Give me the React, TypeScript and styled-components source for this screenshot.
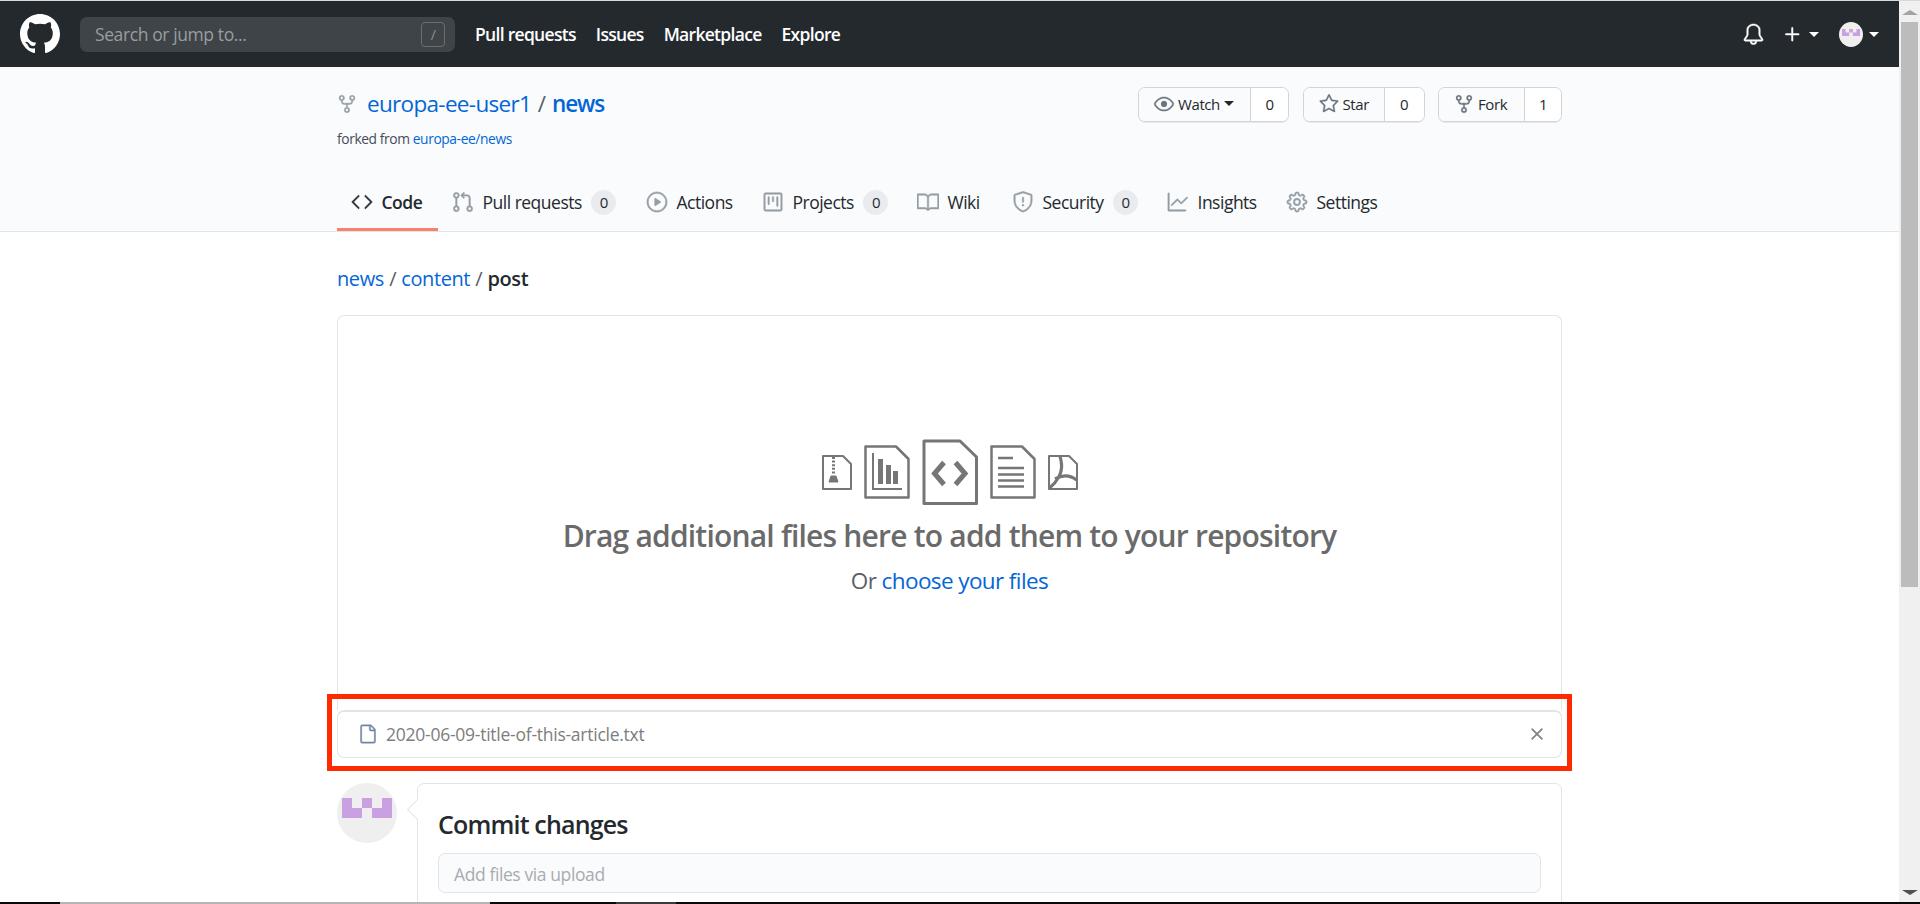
import React from "react";
import styled, { createGlobalStyle } from "styled-components";
import {
  GoBell, GoBook, GoCode, GoEye, GoFile, GoGear, GoGitPullRequest, GoGraph,
  GoPlay, GoPlus, GoProject, GoRepoForked, GoShield, GoStar, GoX,
} from "react-icons/go";

const Global = createGlobalStyle`
  html, body { margin: 0; padding: 0; height: 904px; overflow: hidden; background: #fff; }
  * { box-sizing: border-box; }
  body { font-family: "Open Sans", "Noto Sans", "Liberation Sans", sans-serif; color: #24292e; letter-spacing: -0.4px; }
`;

const Shell = styled.div`height: 904px; display: flex; flex-direction: column; overflow: hidden;`;
const TopEdge = styled.div`height: 1px; background: #d8d8d8; flex: none;`;
const Middle = styled.div`flex: 1; min-height: 0; display: flex;`;
const Page = styled.div`flex: 1; min-width: 0; overflow: hidden;`;

const Scrollbar = styled.div`
  width: 21px; flex: none; background: #f0f0f0; display: flex; flex-direction: column; align-items: center;
`;
const ArrowUp = styled.div`
  margin-top: 9px; width: 0; height: 0; border: 5px solid transparent; border-top: 0; border-bottom: 5px solid #a3a3a3; border-left-width: 8px; border-right-width: 8px;
`;
const Thumb = styled.div`margin-top: 7px; width: 17px; height: 565px; background: #bcbcbc;`;
const ArrowDown = styled.div`
  margin-top: auto; margin-bottom: 7px; width: 0; height: 0; border: 5px solid transparent; border-bottom: 0; border-top: 5px solid #505050; border-left-width: 8px; border-right-width: 8px;
`;
const Taskbar = styled.div`height: 2px; flex: none; display: flex; background: #0a0a0a;`;
const TaskSegment = styled.div<{ $w: number; $c: string }>`width: ${p => p.$w}px; background: ${p => p.$c};`;

const Header = styled.header`
  height: 66px; background: #24292e; display: flex; align-items: center; padding: 0 20px; color: #fff; flex: none;
  & > svg:first-child { flex: none; }
`;
const Search = styled.div`
  width: 375px; height: 35px; margin-left: 20px; border-radius: 7px; background: #3f4448;
  display: flex; align-items: center; justify-content: space-between; padding: 0 10px 0 15px;
  color: #9a9da0; font-size: 17.5px;
`;
const SlashKey = styled.span`
  width: 24px; height: 25px; border: 1px solid #6a6e72; border-radius: 4px; display: flex; align-items: center; justify-content: center;
  font-size: 14px; color: #8c9094;
`;
const TopNav = styled.nav`display: flex; gap: 20px; margin-left: 20px;`;
const TopLink = styled.a`font-size: 17.5px; font-weight: 600; color: #fff; letter-spacing: -0.7px;`;
const HeaderRight = styled.div`
  margin-left: auto; display: flex; align-items: center;
  svg { stroke: currentColor; stroke-width: 0.5; }
`;
const Caret = styled.span<{ $c?: string }>`
  display: inline-block; width: 0; height: 0; border: 5px solid transparent; border-bottom: 0; border-top: 5px solid ${p => p.$c || "#fff"};
`;
const PlusWrap = styled.span`display: flex; align-items: center; gap: 5px; margin-left: 16px;`;
const MiniAvatar = styled.span`
  width: 24px; height: 25px; border-radius: 50%; background: #efefef; display: flex; align-items: center; justify-content: center; padding-bottom: 3px; margin-left: 20px; margin-right: 6px;
  svg { stroke: none; }
`;

const RepoHead = styled.div`height: 165px; background: #fafbfc; border-bottom: 1px solid #e1e4e8;`;
const Container = styled.div`width: 1225px; margin: 0 auto;`;
const RepoHeadInner = styled(Container)`height: 100%; display: flex; flex-direction: column;`;
const TitleRow = styled.div`display: flex; justify-content: space-between; padding-top: 20px;`;
const TitleBlock = styled.div`display: flex; flex-direction: column;`;
const TitleLine = styled.h1`
  margin: 0; font-size: 22.5px; font-weight: 400; line-height: 34px; display: flex; align-items: center; color: #586069;
  svg { color: #959da5; margin-right: 10px; flex: none; stroke: currentColor; stroke-width: 0.5; }
`;
const Blue = styled.a<{ $strong?: boolean }>`
  color: #0366d6; font-weight: ${p => (p.$strong ? 600 : 400)}; letter-spacing: ${p => (p.$strong ? "-1.1px" : "-0.68px")};
`;
const Sep = styled.span`margin: 0 6.5px;`;
const Forked = styled.div`font-size: 13.8px; line-height: 20px; margin-top: 8px; color: #444d56; a { color: #0366d6; }`;
const Actions = styled.div`display: flex; gap: 13.5px;`;
const BtnGroup = styled.div`
  display: flex; height: 35px; border: 1px solid #d1d5da; border-radius: 7px; overflow: hidden; font-size: 15px; box-shadow: 0 1px 0 rgba(27,31,35,.08);
`;
const BtnMain = styled.div<{ $w: number }>`
  width: ${p => p.$w}px; background: #fafbfc; display: flex; align-items: center; gap: 4px; padding: 0 0 2px 15px; font-weight: 500; border-right: 1px solid #d1d5da;
  svg { color: #6a737d; stroke: currentColor; stroke-width: 0.5; }
`;
const BtnCount = styled.div<{ $w: number }>`
  width: ${p => p.$w}px; background: #fff; display: flex; align-items: center; justify-content: center; padding-bottom: 2px; font-weight: 500;
`;
const BtnCaret = styled(Caret)`margin-left: 0;`;

const Tabs = styled.nav`margin-top: auto; display: flex; height: 53px;`;
const Tab = styled.a<{ $active?: boolean; $w: number }>`
  width: ${p => p.$w}px; height: 53px; display: flex; align-items: center; justify-content: flex-start; padding: 0 0 2px 15px; gap: 9.5px; font-size: 17.5px; letter-spacing: -0.5px;
  font-weight: ${p => (p.$active ? 600 : 400)}; color: #24292e;
  border-bottom: 3px solid ${p => (p.$active ? "#f9826c" : "transparent")};
  svg { flex: none; width: 22px; height: 22px; margin: 0 -1px; color: ${p => (p.$active ? "#24292e" : "#959da5")}; stroke: currentColor; stroke-width: 0.6; }
`;
const Badge = styled.span`
  min-width: 25px; height: 25px; border-radius: 50%; background: #e9ebee; display: flex; align-items: center; justify-content: center; font-size: 15px; font-weight: 500;
`;

const Crumbs = styled.div`margin-top: 34px; font-size: 20px; line-height: 26px; color: #586069; word-spacing: 0.4px; a { color: #0366d6; }`;
const CrumbStrong = styled.a`font-weight: 500;`;
const CrumbLast = styled.span`font-weight: 600; color: #24292e;`;

const DropZone = styled.div`
  margin-top: 23px; height: 395px; border: 1px solid #e1e4e8; border-bottom: 0; border-radius: 7px 7px 0 0;
  display: flex; flex-direction: column; align-items: center; padding-top: 123px;
`;
const FileIcons = styled.div`display: flex; align-items: center; gap: 12px; height: 66px;`;
const DropTitle = styled.h2`margin: 11px 0 0; font-size: 30px; line-height: 40px; font-weight: 600; color: #6a6a6a; letter-spacing: -0.8px;`;
const DropSub = styled.p`margin: 10px 0 0; font-size: 22.5px; line-height: 30px; color: #586069; letter-spacing: -0.6px; a { color: #0366d6; }`;

const FileRowWrap = styled.div`position: relative;`;
const FileRow = styled.div`
  height: 48px; border: 1px solid #e1e4e8; border-top: 2px solid #e1e4e8; border-radius: 7px; display: flex; align-items: center; padding: 0 14px 2px 20px;
  color: #6a737d; font-size: 17.5px;
  svg { color: #6f84a3; flex: none; stroke: currentColor; stroke-width: 0.5; }
`;
const FileName = styled.span`margin-left: 8px; flex: 1; color: #7d7d7d; letter-spacing: -0.25px;`;
const CloseIcon = styled(GoX)`&& { color: #858585; stroke: #858585; stroke-width: 0.8; }`;
const Highlight = styled.div`
  position: absolute; left: -10px; right: -10px; top: -16px; bottom: -13px; border: 5px solid #ff2a00; pointer-events: none;
`;

const CommitRow = styled.div`margin-top: 25px; display: flex; gap: 20px; align-items: flex-start;`;
const Avatar = styled.div`
  width: 60px; height: 60px; border-radius: 50%; background: #efefef; flex: none; display: flex; align-items: center; justify-content: center; padding-bottom: 10px;
`;
const CommitBox = styled.div`
  flex: 1; position: relative; height: 200px; border: 1px solid #e1e4e8; border-radius: 7px; padding: 24px 20px 20px;
  &::before {
    content: ""; position: absolute; left: -8px; top: 18px; width: 14px; height: 14px; background: #fff;
    border-left: 1px solid #e1e4e8; border-bottom: 1px solid #e1e4e8; transform: rotate(45deg);
  }
`;
const CommitTitle = styled.h3`margin: 0; font-size: 25px; line-height: 32px; font-weight: 600; color: #24292e; letter-spacing: -0.83px;`;
const CommitInput = styled.div`
  margin-top: 13px; height: 40px; border: 1px solid #e1e4e8; border-radius: 7px; background: #fafbfc; display: flex; align-items: center; padding: 2px 0 0 15px;
  color: #a8acb0; font-size: 17.5px;
`;

const GithubMark = () => (
  <svg width="40" height="40" viewBox="0 0 16 16" fill="currentColor">
    <path d="M8 0C3.58 0 0 3.58 0 8c0 3.54 2.29 6.53 5.47 7.59.4.07.55-.17.55-.38 0-.19-.01-.82-.01-1.49-2.01.37-2.53-.49-2.69-.94-.09-.23-.48-.94-.82-1.13-.28-.15-.68-.52-.01-.53.63-.01 1.08.58 1.23.82.72 1.21 1.87.87 2.33.66.07-.52.28-.87.51-1.07-1.78-.2-3.64-.89-3.64-3.95 0-.87.31-1.59.82-2.15-.08-.2-.36-1.02.08-2.12 0 0 .67-.21 2.2.82.64-.18 1.32-.27 2-.27.68 0 1.36.09 2 .27 1.53-1.04 2.2-.82 2.2-.82.44 1.1.16 1.92.08 2.12.51.56.82 1.27.82 2.15 0 3.07-1.87 3.75-3.65 3.95.29.25.54.73.54 1.48 0 1.07-.01 1.93-.01 2.2 0 .21.15.46.55.38A8.013 8.013 0 0016 8c0-4.42-3.58-8-8-8z" />
  </svg>
);

const Identicon = ({ w }: { w: number }) => (
  <svg width={w} height={(w * 2) / 5} viewBox="0 0 50 20">
    <path fill="#c9a0e2" d="M0 0h10v10h10V0h10v10h10V0h10v20H30V10H20v10H0z" />
  </svg>
);

const Outline = ({ d, sw }: { d: string; sw: number }) => (
  <path d={d} fill="none" stroke="#767676" strokeWidth={sw} strokeLinejoin="round" />
);

const ZipIcon = () => (
  <svg width="30" height="35" viewBox="0 0 30 35">
    <Outline d="M1 1H21L29 9V34H1Z" sw={2} />
    <path d="M11.5 2V20" stroke="#767676" strokeWidth="3" strokeDasharray="2 1.6" fill="none" />
    <path d="M9 21H14L16 27H7Z" fill="#767676" stroke="#767676" strokeWidth="1" />
  </svg>
);
const ChartIcon = () => (
  <svg width="46" height="54" viewBox="0 0 46 54">
    <Outline d="M1.5 1.5H32L44.5 14V52.5H1.5Z" sw={2.5} />
    <path d="M9 8V44H38" fill="none" stroke="#767676" strokeWidth="2" />
    <path d="M14 14h5v25h-5zM22 20h5v19h-5zM29 26h5v13h-5z" fill="#767676" />
  </svg>
);
const CodeIcon = () => (
  <svg width="56" height="66" viewBox="0 0 56 66">
    <Outline d="M2 2H38L54.5 18V64.5H2Z" sw={3} />
    <path d="M22 23.5L12.5 34.5L22 45.5M33.5 23.5L43 34.5L33.5 45.5" fill="none" stroke="#767676" strokeWidth="5" />
  </svg>
);
const DocIcon = () => (
  <svg width="46" height="54" viewBox="0 0 46 54">
    <Outline d="M1.5 1.5H32L44.5 14V52.5H1.5Z" sw={2.5} />
    <path d="M8 13H23M8 23H34M8 29.5H34M8 35.5H34M8 41.5H34" fill="none" stroke="#767676" strokeWidth="2.5" />
  </svg>
);
const PdfIcon = () => (
  <svg width="30" height="35" viewBox="0 0 30 35">
    <Outline d="M1 1H21L29 9V34H1Z" sw={2} />
    <path d="M1.5 33C9 27 14.5 18 13.5 9Q13 4 12 1.5M7 24C14 20 22 20 28.5 25" fill="none" stroke="#767676" strokeWidth="3.2" />
  </svg>
);

export default function App() {
  return (
    <Shell>
      <Global />
      <TopEdge />
      <Middle>
        <Page>
          <Header>
            <GithubMark />
            <Search>
              Search or jump to...
              <SlashKey>/</SlashKey>
            </Search>
            <TopNav>
              <TopLink>Pull requests</TopLink>
              <TopLink>Issues</TopLink>
              <TopLink>Marketplace</TopLink>
              <TopLink>Explore</TopLink>
            </TopNav>
            <HeaderRight>
              <GoBell size={23} />
              <PlusWrap>
                <GoPlus size={23} />
                <Caret />
              </PlusWrap>
              <MiniAvatar>
                <Identicon w={18} />
              </MiniAvatar>
              <Caret />
            </HeaderRight>
          </Header>

          <RepoHead>
            <RepoHeadInner>
              <TitleRow>
                <TitleBlock>
                  <TitleLine>
                    <GoRepoForked size={20} />
                    <Blue>europa-ee-user1</Blue>
                    <Sep>/</Sep>
                    <Blue $strong>news</Blue>
                  </TitleLine>
                  <Forked>
                    forked from <a>europa-ee/news</a>
                  </Forked>
                </TitleBlock>
                <Actions>
                  <BtnGroup>
                    <BtnMain $w={112}>
                      <GoEye size={20} />
                      Watch
                      <BtnCaret $c="#24292e" />
                    </BtnMain>
                    <BtnCount $w={37}>0</BtnCount>
                  </BtnGroup>
                  <BtnGroup>
                    <BtnMain $w={81}>
                      <GoStar size={20} />
                      Star
                    </BtnMain>
                    <BtnCount $w={39}>0</BtnCount>
                  </BtnGroup>
                  <BtnGroup>
                    <BtnMain $w={86}>
                      <GoRepoForked size={20} />
                      Fork
                    </BtnMain>
                    <BtnCount $w={36}>1</BtnCount>
                  </BtnGroup>
                </Actions>
              </TitleRow>
              <Tabs>
                <Tab $active $w={101}><GoCode size={20} />Code</Tab>
                <Tab $w={194}><GoGitPullRequest size={20} />Pull requests<Badge>0</Badge></Tab>
                <Tab $w={116}><GoPlay size={20} />Actions</Tab>
                <Tab $w={155}><GoProject size={20} />Projects<Badge>0</Badge></Tab>
                <Tab $w={95}><GoBook size={20} />Wiki</Tab>
                <Tab $w={155}><GoShield size={20} />Security<Badge>0</Badge></Tab>
                <Tab $w={119}><GoGraph size={20} />Insights</Tab>
                <Tab $w={110}><GoGear size={20} />Settings</Tab>
              </Tabs>
            </RepoHeadInner>
          </RepoHead>

          <Container>
            <Crumbs>
              <CrumbStrong>news</CrumbStrong> / <a>content</a> / <CrumbLast>post</CrumbLast>
            </Crumbs>
            <DropZone>
              <FileIcons>
                <ZipIcon />
                <ChartIcon />
                <CodeIcon />
                <DocIcon />
                <PdfIcon />
              </FileIcons>
              <DropTitle>Drag additional files here to add them to your repository</DropTitle>
              <DropSub>
                Or <a>choose your files</a>
              </DropSub>
            </DropZone>
            <FileRowWrap>
              <FileRow>
                <GoFile size={20} />
                <FileName>2020-06-09-title-of-this-article.txt</FileName>
                <CloseIcon size={20} />
              </FileRow>
              <Highlight />
            </FileRowWrap>
            <CommitRow>
              <Avatar>
                <Identicon w={50} />
              </Avatar>
              <CommitBox>
                <CommitTitle>Commit changes</CommitTitle>
                <CommitInput>Add files via upload</CommitInput>
              </CommitBox>
            </CommitRow>
          </Container>
        </Page>
        <Scrollbar>
          <ArrowUp />
          <Thumb />
          <ArrowDown />
        </Scrollbar>
      </Middle>
      <Taskbar>
        <TaskSegment $w={60} $c="#0a0a0a" />
        <TaskSegment $w={430} $c="#b5b5b5" />
        <TaskSegment $w={126} $c="#0a0a0a" />
        <TaskSegment $w={60} $c="#3a3a3a" />
      </Taskbar>
    </Shell>
  );
}
